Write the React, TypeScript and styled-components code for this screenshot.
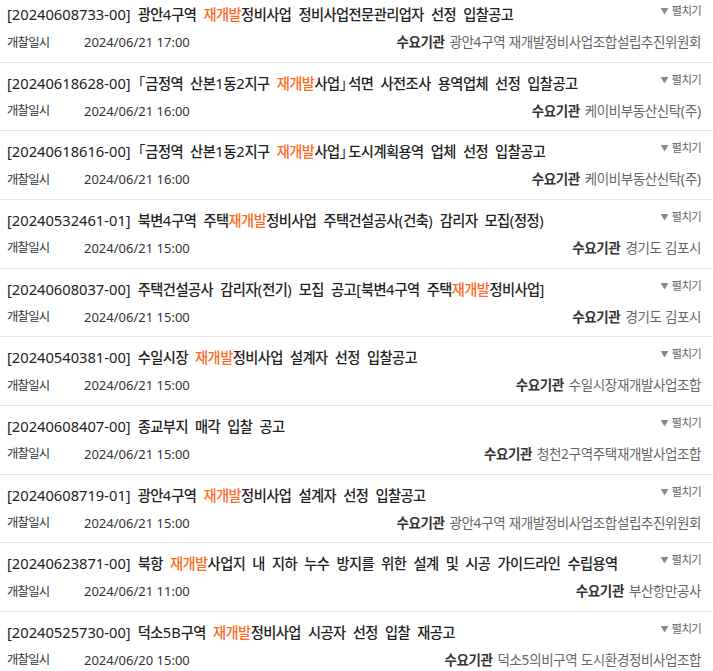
import React, { FC, ReactNode } from 'react';
import styled, { createGlobalStyle } from 'styled-components';

const GlobalStyle = createGlobalStyle`
  html, body {
    margin: 0;
    padding: 0;
    background: #fff;
  }
  body {
    font-family: 'Noto Sans', 'Noto Sans CJK KR', sans-serif;
    color: #222;
    overflow: hidden;
  }
`;

const List = styled.ul`
  list-style: none;
  margin: -6px 0 0;
  padding: 0;
`;

const Item = styled.li`
  padding: 10px 12px 9.67px 7px;
  border-bottom: 1px solid #e6e6e6;
`;

const TopRow = styled.div`
  display: flex;
  justify-content: space-between;
  align-items: flex-start;
  height: 20px;
`;

const Title = styled.div`
  font-size: 14.7px;
  line-height: 20px;
  word-spacing: 3.3px;
  color: #222;
  white-space: nowrap;
`;

const Highlight = styled.span`
  color: #ff6a1f;
`;

const Toggle = styled.span`
  display: flex;
  align-items: center;
  gap: 3px;
  margin-top: -3px;
  font-size: 12px;
  line-height: 20px;
  color: #666;
`;

const Caret = styled.span`
  font-size: 8px;
  color: #888;
`;

const MetaRow = styled.div`
  display: flex;
  justify-content: space-between;
  align-items: center;
  margin-top: 8px;
  height: 20px;
  font-size: 13px;
  line-height: 20px;
`;

const DateBox = styled.div`
  display: flex;
  align-items: center;
`;

const Label = styled.span`
  width: 77px;
  color: #333;
`;

const DateText = styled.span`
  color: #333;
`;

const Agency = styled.div`
  display: flex;
  align-items: center;
  gap: 5px;
  font-size: 13.5px;
`;

const AgencyLabel = styled.span`
  font-weight: 700;
  color: #333;
`;

const AgencyName = styled.span`
  color: #666;
`;

// Hangul runs are resized so the widths follow the original font
const Ko = styled.span<{ $size: number; $ls: number; $weight?: number }>`
  font-size: ${(p) => p.$size}em;
  letter-spacing: ${(p) => p.$ls}em;
  font-weight: ${(p) => p.$weight ?? 'inherit'};
`;

// the closing corner bracket only uses the left half of its box
const Corner = styled.span<{ $open: boolean }>`
  letter-spacing: ${(p) => (p.$open ? '0' : '-0.4em')};
`;

type KoOpts = { size: number; ls: number; weight?: number };

const ko = (text: string, o: KoOpts): ReactNode[] =>
  text
    .split(/([\uAC00-\uD7A3]+|[「」])/)
    .filter(Boolean)
    .map((part, i) => {
      if (part === '「' || part === '」') {
        return (
          <Corner key={i} $open={part === '「'}>
            {part}
          </Corner>
        );
      }
      if (/[\uAC00-\uD7A3]/.test(part)) {
        return (
          <Ko key={i} $size={o.size} $ls={o.ls} $weight={o.weight}>
            {part}
          </Ko>
        );
      }
      return <React.Fragment key={i}>{part}</React.Fragment>;
    });

const titleKo: KoOpts = { size: 0.97, ls: -0.04, weight: 500 };
const labelKo: KoOpts = { size: 0.95, ls: -0.06 };
const agencyKo: KoOpts = { size: 1, ls: -0.03 };
const toggleKo: KoOpts = { size: 0.95, ls: -0.06 };

interface Notice {
  no: string;
  before: string;
  after: string;
  date: string;
  agency: string;
}

const notices: Notice[] = [
  { no: '20240608733-00', before: '광안4구역 ', after: '정비사업 정비사업전문관리업자 선정 입찰공고', date: '2024/06/21 17:00', agency: '광안4구역 재개발정비사업조합설립추진위원회' },
  { no: '20240618628-00', before: '「금정역 산본1동2지구 ', after: '사업」석면 사전조사 용역업체 선정 입찰공고', date: '2024/06/21 16:00', agency: '케이비부동산신탁(주)' },
  { no: '20240618616-00', before: '「금정역 산본1동2지구 ', after: '사업」도시계획용역 업체 선정 입찰공고', date: '2024/06/21 16:00', agency: '케이비부동산신탁(주)' },
  { no: '20240532461-01', before: '북변4구역 주택', after: '정비사업 주택건설공사(건축) 감리자 모집(정정)', date: '2024/06/21 15:00', agency: '경기도 김포시' },
  { no: '20240608037-00', before: '주택건설공사 감리자(전기) 모집 공고[북변4구역 주택', after: '정비사업]', date: '2024/06/21 15:00', agency: '경기도 김포시' },
  { no: '20240540381-00', before: '수일시장 ', after: '정비사업 설계자 선정 입찰공고', date: '2024/06/21 15:00', agency: '수일시장재개발사업조합' },
  { no: '20240608407-00', before: '종교부지 매각 입찰 공고', after: '', date: '2024/06/21 15:00', agency: '청천2구역주택재개발사업조합' },
  { no: '20240608719-01', before: '광안4구역 ', after: '정비사업 설계자 선정 입찰공고', date: '2024/06/21 15:00', agency: '광안4구역 재개발정비사업조합설립추진위원회' },
  { no: '20240623871-00', before: '북항 ', after: '사업지 내 지하 누수 방지를 위한 설계 및 시공 가이드라인 수립용역', date: '2024/06/21 11:00', agency: '부산항만공사' },
  { no: '20240525730-00', before: '덕소5B구역 ', after: '정비사업 시공자 선정 입찰 재공고', date: '2024/06/20 15:00', agency: '덕소5의비구역 도시환경정비사업조합' },
];

const NoticeItem: FC<{ notice: Notice }> = ({ notice }) => (
  <Item>
    <TopRow>
      <Title>
        [{notice.no}]{notice.before.startsWith('「') ? '' : ' '}
        {ko(notice.before, titleKo)}
        {notice.after !== '' && <Highlight>{ko('재개발', titleKo)}</Highlight>}
        {ko(notice.after, titleKo)}
      </Title>
      <Toggle>
        <Caret>▼</Caret>
        {ko('펼치기', toggleKo)}
      </Toggle>
    </TopRow>
    <MetaRow>
      <DateBox>
        <Label>{ko('개찰일시', labelKo)}</Label>
        <DateText>{notice.date}</DateText>
      </DateBox>
      <Agency>
        <AgencyLabel>{ko('수요기관', agencyKo)}</AgencyLabel>
        <AgencyName>{ko(notice.agency, agencyKo)}</AgencyName>
      </Agency>
    </MetaRow>
  </Item>
);

const App: FC = () => (
  <>
    <GlobalStyle />
    <List>
      {notices.map((n) => (
        <NoticeItem key={n.no} notice={n} />
      ))}
    </List>
  </>
);

export default App;
